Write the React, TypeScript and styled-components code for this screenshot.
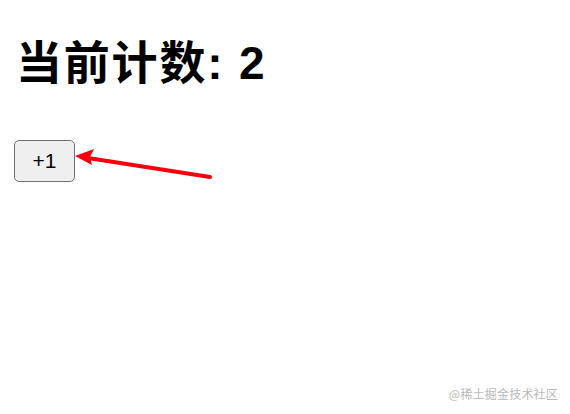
import React, { useState } from 'react'
import styled, { createGlobalStyle } from 'styled-components'

const GlobalStyle = createGlobalStyle`
    html, body {
        margin: 0;
        padding: 0;
        background: #ffffff;
    }
`

const Page = styled.main`
    position: relative;
    width: 570px;
    height: 414px;
    padding: 28px 14px 0 14px;
    box-sizing: border-box;
    font-family: 'Liberation Sans', 'Noto Sans CJK SC', sans-serif;
    color: #000;
    overflow: hidden;
`

const Title = styled.h1`
    margin: 0 0 0 2px;
    font-size: 46px;
    line-height: 70px;
    font-weight: 700;
    letter-spacing: 1.8px;
`

const Row = styled.div`
    position: relative;
    margin-top: 42px;
    height: 42px;
`

const CountButton = styled.button`
    width: 61px;
    height: 42px;
    padding: 0;
    font-family: 'Liberation Sans', sans-serif;
    font-size: 21px;
    color: #000;
    background: #efefef;
    border: 1.5px solid #707070;
    border-radius: 5px;
    cursor: pointer;
`

const Arrow = styled.svg`
    position: absolute;
    left: 60px;
    top: 4px;
    pointer-events: none;
`

const Watermark = styled.div`
    position: absolute;
    right: 12px;
    bottom: 12px;
    font-family: 'Noto Sans CJK SC', sans-serif;
    font-size: 12px;
    color: #b8b8b8;
    letter-spacing: 0.2px;
`

const App = () => {
    const [count, setCount] = useState(2)

    return (
        <Page>
            <GlobalStyle />
            <Title>当前计数: {count}</Title>
            <Row>
                <CountButton onClick={() => setCount(count + 1)}>+1</CountButton>
                <Arrow width="150" height="40" viewBox="0 0 150 40">
                    <line x1="136" y1="33" x2="14" y2="14" stroke="#f5000d" strokeWidth="4" strokeLinecap="round" />
                    <path d="M1 12 L20 5 L16 13 L18 21 Z" fill="#f5000d" />
                </Arrow>
            </Row>
            <Watermark>@稀土掘金技术社区</Watermark>
        </Page>
    )
}

export default App
